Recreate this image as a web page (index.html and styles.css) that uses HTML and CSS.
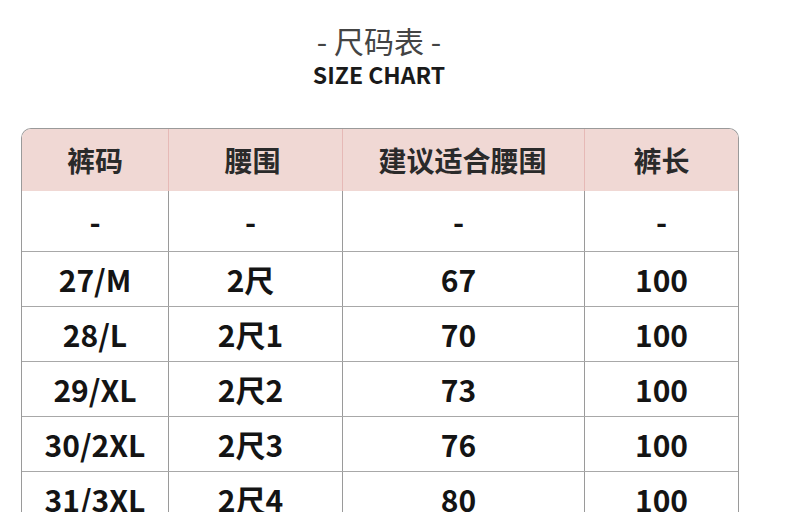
FILE: index.html
```html
<!DOCTYPE html>
<html lang="zh">
<head>
<meta charset="utf-8">
<link rel="stylesheet" href="styles.css">
</head>
<body>
<div class="page">
  <div class="heading">
    <div class="title-cn">- 尺码表 -</div>
    <div class="title-en">SIZE CHART</div>
  </div>
  <div class="table">
    <div class="row head">
      <div class="cell">裤码</div>
      <div class="cell">腰围</div>
      <div class="cell">建议适合腰围</div>
      <div class="cell">裤长</div>
    </div>
    <div class="row first">
      <div class="cell">-</div>
      <div class="cell">-</div>
      <div class="cell">-</div>
      <div class="cell">-</div>
    </div>
    <div class="row">
      <div class="cell">27/M</div>
      <div class="cell">2尺</div>
      <div class="cell">67</div>
      <div class="cell">100</div>
    </div>
    <div class="row">
      <div class="cell">28/L</div>
      <div class="cell">2尺1</div>
      <div class="cell">70</div>
      <div class="cell">100</div>
    </div>
    <div class="row">
      <div class="cell">29/XL</div>
      <div class="cell">2尺2</div>
      <div class="cell">73</div>
      <div class="cell">100</div>
    </div>
    <div class="row">
      <div class="cell">30/2XL</div>
      <div class="cell">2尺3</div>
      <div class="cell">76</div>
      <div class="cell">100</div>
    </div>
    <div class="row">
      <div class="cell">31/3XL</div>
      <div class="cell">2尺4</div>
      <div class="cell">80</div>
      <div class="cell">100</div>
    </div>
  </div>
</div>
</body>
</html>
```
FILE: styles.css
```css
html, body {
  margin: 0;
  padding: 0;
  background: #ffffff;
}
body {
  font-family: "Noto Sans CJK SC", "Noto Sans", sans-serif;
  color: #111;
  overflow: hidden;
}
.page {
  width: 796px;
  height: 512px;
  overflow: hidden;
}
.heading {
  width: 716px;
  margin-left: 21px;
  display: flex;
  flex-direction: column;
  align-items: center;
  padding-top: 21px;
}
.title-cn {
  font-size: 30px;
  line-height: 38px;
  font-weight: 400;
  color: #444;
}
.title-en {
  font-size: 23px;
  line-height: 30px;
  font-weight: 700;
  color: #1a1a1a;
}
.table {
  margin-top: 39px;
  margin-left: 21px;
  width: 716px;
  border: 1px solid #9a9a9a;
  border-bottom: none;
  border-radius: 10px 10px 0 0;
  overflow: hidden;
}
.row {
  display: grid;
  grid-template-columns: 146px 174px 242px 1fr;
  box-sizing: border-box;
  height: 55px;
  border-top: 1px solid #a8a8a8;
}
.row.head {
  height: 62px;
  border-top: none;
  background: #f0d8d4;
}
.row.first {
  height: 60px;
  border-top: none;
}
.cell {
  display: flex;
  align-items: center;
  justify-content: center;
  font-size: 30px;
  font-weight: 700;
  border-left: 1px solid #9a9a9a;
  color: #141414;
}
.cell:first-child {
  border-left: none;
}
.cell:nth-child(2),
.cell:nth-child(3) {
  padding-right: 10px;
}
.head .cell {
  font-size: 28px;
  color: #2a2a2a;
  border-left-color: #e6b9b6;
}
.head .cell:nth-child(2) {
  padding-right: 6px;
}
.head .cell:nth-child(3) {
  padding-right: 2px;
}
```
